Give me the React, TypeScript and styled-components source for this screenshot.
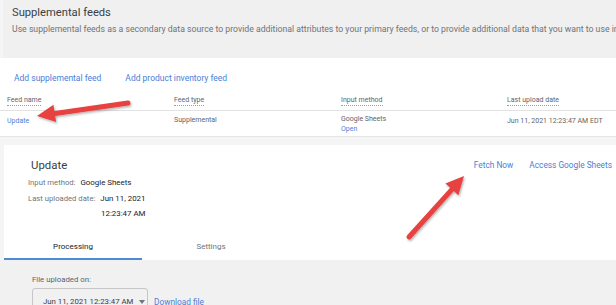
import React from "react";
import styled, { createGlobalStyle } from "styled-components";

const GlobalStyle = createGlobalStyle`
  html, body {
    margin: 0;
    padding: 0;
    background: #f5f5f5;
    font-family: Roboto, "Liberation Sans", Arial, sans-serif;
    overflow: hidden;
  }
`;

const BLUE = "#4a80d8";

const Page = styled.div`
  position: relative;
  width: 616px;
  height: 305px;
  overflow: hidden;
  display: flex;
  flex-direction: column;

  & > * {
    flex-shrink: 0;
  }
`;

const HeaderPanel = styled.div`
  margin-left: 3px;
  height: 58px;
  box-sizing: border-box;
  padding: 6px 0 0 9px;
  background: #f0f0f0;
  white-space: nowrap;
  overflow: hidden;
`;

const Title = styled.div`
  font-size: 11.2px;
  line-height: 14px;
  color: #3c4043;
`;

const Description = styled.div`
  margin-top: 3px;
  font-size: 8.7px;
  line-height: 12px;
  color: #6f7377;
`;

const TableSection = styled.div`
  background: #fff;
  padding-top: 12px;
  border-bottom: 1px solid #e6e6e6;
`;

const Actions = styled.div`
  display: flex;
  gap: 24px;
  padding-left: 14px;
  height: 16px;
  align-items: center;
`;

const Link = styled.span<{ size?: number }>`
  font-size: ${(p) => p.size ?? 8.5}px;
  line-height: 12px;
  color: ${BLUE};
  white-space: nowrap;
`;

const Row = styled.div<{ head?: boolean }>`
  display: grid;
  grid-template-columns: 167px 167px 166px 1fr;
  padding-left: 7px;
  height: 25px;
  box-sizing: border-box;
  align-items: ${(p) => (p.head ? "end" : "start")};
  padding-top: ${(p) => (p.head ? 0 : 3)}px;
  padding-bottom: ${(p) => (p.head ? 4 : 0)}px;
  border-bottom: ${(p) => (p.head ? "1px solid #e2e2e2" : "none")};
`;

const HeadCell = styled.div`
  justify-self: start;
  font-size: 7px;
  line-height: 10px;
  color: #5f6368;
  border-bottom: 1px dotted #9aa0a6;
  white-space: nowrap;
`;

const Cell = styled.div<{ link?: boolean; offset?: number }>`
  display: flex;
  flex-direction: column;
  padding-top: ${(p) => p.offset ?? 0}px;
  font-size: 7px;
  line-height: 10px;
  color: ${(p) => (p.link ? BLUE : "#5f6368")};
  white-space: nowrap;
`;

const CellLink = styled.span`
  color: ${BLUE};
`;

const Card = styled.div`
  margin: 8px 0 0 4px;
  background: #fff;
`;

const CardTop = styled.div`
  display: flex;
  justify-content: space-between;
  align-items: flex-start;
  padding: 12px 4px 13px 24px;
`;

const CardTitle = styled.div`
  padding-left: 3px;
  font-size: 11.4px;
  line-height: 16px;
  color: #3c4043;
  margin-bottom: 2px;
`;

const InfoRow = styled.div`
  display: flex;
  gap: 5px;
  font-size: 7.7px;
  line-height: 15.5px;
`;

const InfoLabel = styled.span`
  color: #70757a;
`;

const InfoValue = styled.span`
  display: flex;
  flex-direction: column;
  align-items: flex-end;
  color: #202124;
  font-size: 7.9px;
`;

const TopLinks = styled.div`
  display: flex;
  gap: 16px;
  padding-top: 2px;
`;

const Tabs = styled.div`
  display: flex;
`;

const Tab = styled.div<{ active?: boolean }>`
  width: 138px;
  height: 25px;
  box-sizing: border-box;
  display: flex;
  align-items: center;
  justify-content: center;
  font-size: 8px;
  color: ${(p) => (p.active ? "#202124" : "#70757a")};
  border-bottom: 2px solid ${(p) => (p.active ? "#4d8ad8" : "transparent")};
`;

const Lower = styled.div`
  flex: 1;
  background: #f1f1f1;
  padding: 14px 0 0 32px;
`;

const FieldLabel = styled.div`
  font-size: 7.8px;
  line-height: 12px;
  color: #5f6368;
`;

const FieldRow = styled.div`
  display: flex;
  align-items: center;
  gap: 6px;
  margin-top: 2px;
`;

const Dropdown = styled.div`
  width: 116px;
  height: 28px;
  box-sizing: border-box;
  border: 1px solid #c6c6c6;
  border-radius: 3px;
  display: flex;
  align-items: center;
  gap: 6px;
  padding-left: 10px;
  font-size: 7.8px;
  color: #3c4043;
  white-space: nowrap;
`;

const Overlay = styled.svg`
  position: absolute;
  left: 0;
  top: 0;
  pointer-events: none;
`;

const ARROW = "#e8423f";

const Arrow = ({ shaft, head }: { shaft: number[]; head: string }) => (
  <g filter="url(#shadow)">
    <line
      x1={shaft[0]}
      y1={shaft[1]}
      x2={shaft[2]}
      y2={shaft[3]}
      stroke={ARROW}
      strokeWidth={5}
      strokeLinecap="round"
    />
    <polygon points={head} fill={ARROW} />
  </g>
);

export default function App() {
  return (
    <>
      <GlobalStyle />
      <Page>
        <HeaderPanel>
          <Title>Supplemental feeds</Title>
          <Description>
            Use supplemental feeds as a secondary data source to provide additional attributes to
            your primary feeds, or to provide additional data that you want to use in
          </Description>
        </HeaderPanel>

        <TableSection>
          <Actions>
            <Link>Add supplemental feed</Link>
            <Link>Add product inventory feed</Link>
          </Actions>
          <Row head>
            <HeadCell>Feed name</HeadCell>
            <HeadCell>Feed type</HeadCell>
            <HeadCell>Input method</HeadCell>
            <HeadCell>Last upload date</HeadCell>
          </Row>
          <Row>
            <Cell link offset={2}>Update</Cell>
            <Cell offset={1}>Supplemental</Cell>
            <Cell>
              Google Sheets
              <CellLink>Open</CellLink>
            </Cell>
            <Cell offset={2}>Jun 11, 2021 12:23:47 AM EDT</Cell>
          </Row>
        </TableSection>

        <Card>
          <CardTop>
            <div>
              <CardTitle>Update</CardTitle>
              <InfoRow>
                <InfoLabel>Input method:</InfoLabel>
                <InfoValue>Google Sheets</InfoValue>
              </InfoRow>
              <InfoRow>
                <InfoLabel>Last uploaded date:</InfoLabel>
                <InfoValue>
                  <span>Jun 11, 2021</span>
                  <span>12:23:47 AM</span>
                </InfoValue>
              </InfoRow>
            </div>
            <TopLinks>
              <Link size={8.3}>Fetch Now</Link>
              <Link size={8.3}>Access Google Sheets</Link>
            </TopLinks>
          </CardTop>
          <Tabs>
            <Tab active>Processing</Tab>
            <Tab>Settings</Tab>
          </Tabs>
        </Card>

        <Lower>
          <FieldLabel>File uploaded on:</FieldLabel>
          <FieldRow>
            <Dropdown>
              Jun 11, 2021 12:23:47 AM
              <svg width="6" height="4" viewBox="0 0 6 4">
                <path d="M0 0h6L3 4z" fill="#70757a" />
              </svg>
            </Dropdown>
            <Link size={8.3}>Download file</Link>
          </FieldRow>
        </Lower>

        <Overlay width="616" height="305" viewBox="0 0 616 305">
          <defs>
            <filter id="shadow" x="-20%" y="-20%" width="140%" height="140%">
              <feDropShadow dx="1" dy="1.5" stdDeviation="1.2" floodColor="#000" floodOpacity="0.3" />
            </filter>
          </defs>
          <Arrow shaft={[128, 103, 55, 113.4]} head="37,116 53.4,104.8 56.2,122.1" />
          <Arrow shaft={[409, 237, 452, 189.4]} head="464,176 445.4,183.6 458.4,195.2" />
        </Overlay>
      </Page>
    </>
  );
}
